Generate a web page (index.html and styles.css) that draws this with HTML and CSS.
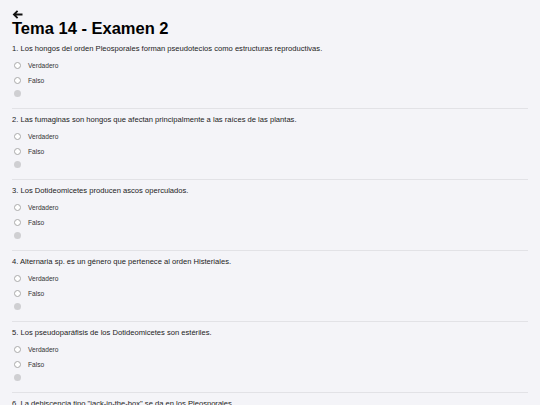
FILE: index.html
```html
<!DOCTYPE html>
<html lang="es">
<head>
<meta charset="utf-8">
<title>Tema 14 - Examen 2</title>
<link rel="stylesheet" href="styles.css">
</head>
<body>
<div class="page">
  <div class="back">
    <svg width="11" height="9" viewBox="0 0 11 9"><path d="M10.5 4.5H2M5.6 0.9L1.9 4.5l3.7 3.6" fill="none" stroke="#111" stroke-width="1.8"/></svg>
  </div>
  <h1 class="title">Tema 14 - Examen 2</h1>

  <div class="question">
    <p class="qtext">1. Los hongos del orden Pleosporales forman pseudotecios como estructuras reproductivas.</p>
    <div class="opt"><span class="radio"></span>Verdadero</div>
    <div class="opt"><span class="radio"></span>Falso</div>
    <div class="dot"></div>
  </div>
  <div class="question">
    <p class="qtext">2. Las fumaginas son hongos que afectan principalmente a las raíces de las plantas.</p>
    <div class="opt"><span class="radio"></span>Verdadero</div>
    <div class="opt"><span class="radio"></span>Falso</div>
    <div class="dot"></div>
  </div>
  <div class="question">
    <p class="qtext">3. Los Dotideomicetes producen ascos operculados.</p>
    <div class="opt"><span class="radio"></span>Verdadero</div>
    <div class="opt"><span class="radio"></span>Falso</div>
    <div class="dot"></div>
  </div>
  <div class="question">
    <p class="qtext">4. Alternaria sp. es un género que pertenece al orden Histeriales.</p>
    <div class="opt"><span class="radio"></span>Verdadero</div>
    <div class="opt"><span class="radio"></span>Falso</div>
    <div class="dot"></div>
  </div>
  <div class="question">
    <p class="qtext">5. Los pseudoparáfisis de los Dotideomicetes son estériles.</p>
    <div class="opt"><span class="radio"></span>Verdadero</div>
    <div class="opt"><span class="radio"></span>Falso</div>
    <div class="dot"></div>
  </div>
  <div class="question">
    <p class="qtext">6. La dehiscencia tipo "jack-in-the-box" se da en los Pleosporales.</p>
    <div class="opt"><span class="radio"></span>Verdadero</div>
    <div class="opt"><span class="radio"></span>Falso</div>
    <div class="dot"></div>
  </div>
</div>
</body>
</html>
```
FILE: styles.css
```css
html, body {
  margin: 0;
  padding: 0;
  background: #f4f4f8;
}
body {
  font-family: "Liberation Sans", Arial, sans-serif;
  color: #111;
}
.page {
  padding: 10px 12px 0 12px;
}
.back {
  height: 9px;
  line-height: 0;
}
.title {
  margin: 0 0 1px 0;
  font-size: 16.5px;
  line-height: 18px;
  font-weight: bold;
  color: #000;
}
.question {
  border-bottom: 1px solid #e2e2e6;
  padding: 6px 0 11px 0;
}
.qtext {
  margin: 0;
  font-size: 7.6px;
  line-height: 9px;
  color: #222;
}
.opt {
  display: flex;
  align-items: center;
  gap: 7px;
  height: 15px;
  font-size: 6.6px;
  color: #333;
  padding-left: 2px;
}
.opt:first-of-type {
  margin-top: 5px;
}
.radio {
  width: 5px;
  height: 5px;
  border: 0.7px solid #aaa;
  border-radius: 50%;
  background: #fff;
  box-sizing: content-box;
}
.dot {
  width: 7px;
  height: 7px;
  border-radius: 50%;
  background: #cfcfd2;
  margin: 2px 0 0 2px;
}
```
